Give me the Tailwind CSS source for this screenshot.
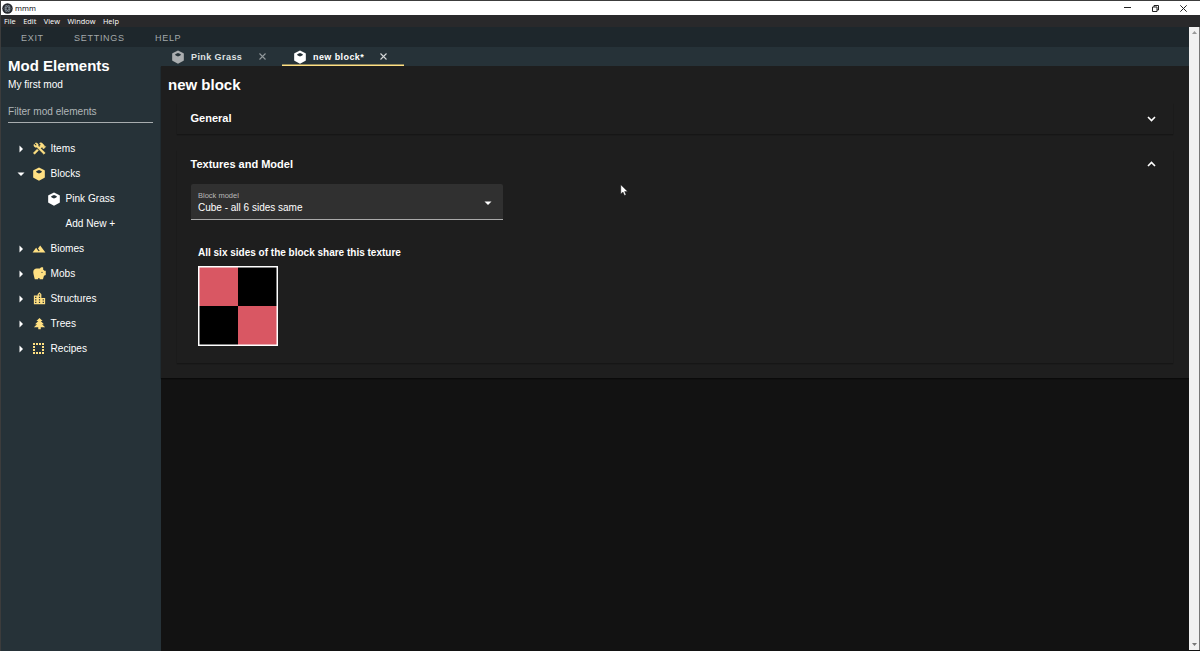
<!DOCTYPE html>
<html lang="en">
<head>
  <meta charset="UTF-8" />
  <meta name="viewport" content="width=device-width, initial-scale=1.0" />
  <title>mmm</title>
  <script src="https://cdn.jsdelivr.net/npm/@tailwindcss/browser@4"></script>
</head>
<body class="h-screen overflow-hidden flex flex-col bg-[#121212] text-white font-['Liberation_Sans',sans-serif] border-t border-l border-[#3c3c3c]">
  <!-- Shared icons -->
  <svg class="hidden">
    <symbol id="cube" viewBox="0 0 24 24"><path fill-rule="evenodd" d="M12 1L21.500 5.500Q22 6 22 7V17Q22 18 21.500 18.300L12 23.500L2.500 18.300Q2 18 2 17V7Q2 6 2.500 5.500ZM12 5L7 7.300L8 9.500L12 11L16 9.500L17 7.300Z" /></symbol>
    <symbol id="right" viewBox="0 0 24 24"><path d="M9 5V19L16 12Z" /></symbol>
  </svg>

  <!-- Title bar -->
  <header class="h-[14px] shrink-0 flex items-center bg-white text-black">
    <svg class="size-[11px] ml-px" viewBox="0 0 22 22" fill="none" stroke="#8e9aa3" stroke-width="1.3">
      <circle cx="11" cy="11" r="10.500" fill="#25272d" stroke="none" />
      <ellipse cx="11" cy="11" rx="7" ry="3" />
      <ellipse cx="11" cy="11" rx="7" ry="3" transform="rotate(60 11 11)" />
      <ellipse cx="11" cy="11" rx="7" ry="3" transform="rotate(120 11 11)" />
    </svg>
    <span class="ml-[2px] pt-px text-[7.500px] leading-none font-['Open_Sans',sans-serif]">mmm</span>
    <div class="ml-auto flex items-center gap-[21px] pr-[13px]">
      <svg class="w-[7px] h-[8px]" viewBox="0 0 7 8" stroke="#222"><path d="M0 3.500H7" /></svg>
      <svg class="w-[7px] h-[7px]" viewBox="0 0 7 7" fill="none" stroke="#222"><path d="M.5 2H5V6.500H.5ZM2 2V.5H6.500V5H5" /></svg>
      <svg class="w-[7px] h-[7px]" viewBox="0 0 7 7" stroke="#222"><path d="M.3 .3L6.700 6.700M6.700 .3L.3 6.700" /></svg>
    </div>
  </header>

  <!-- Native menu -->
  <nav class="h-[12px] shrink-0 flex items-center gap-[7.500px] pl-[3px] pt-px bg-[#29292b] text-[7.400px] leading-none font-['Open_Sans',sans-serif]">
    <span>File</span><span>Edit</span><span>View</span><span>Window</span><span>Help</span>
  </nav>

  <div class="flex flex-1 min-h-0">
    <div class="flex-1 flex flex-col min-w-0">
      <!-- App toolbar -->
      <nav class="h-[20px] shrink-0 flex items-center gap-[30.300px] pl-[20px] pt-[2px] bg-[#1e272c] text-[#a3a8aa] text-[9px] leading-none tracking-[0.7px]">
        <span>EXIT</span><span>SETTINGS</span><span>HELP</span>
      </nav>

      <div class="flex flex-1 min-h-0">
        <!-- Sidebar -->
        <aside class="w-[160px] shrink-0 bg-[#263238] text-[10.100px]">
          <h1 class="pt-[10px] pl-[7px] text-[15px] leading-[18px] font-bold">Mod Elements</h1>
          <p class="pl-[7px] mt-[3px] leading-[13px]">My first mod</p>
          <div class="ml-[7px] mr-[8px] mt-[14px] h-[18px] border-b border-[#a8adaf] text-[#b0b6b9] leading-[13px]">Filter mod elements</div>

          <ul class="mt-[13px] fill-[#ffe082]">
            <li class="h-[25px] flex items-center pl-[14px]">
              <svg class="size-[12px] fill-white"><use href="#right" /></svg>
              <svg class="size-[15px] ml-[5px] mr-[3.500px] -scale-x-100 stroke-[#ffe082]" stroke-width=".8" viewBox="0 0 24 24"><path d="M13.780 15.300L19.780 21.300L21.890 19.140L15.890 13.140L13.780 15.300M17.500 10.100C17.110 10.100 16.690 10.050 16.360 9.910L4.970 21.250L2.860 19.140L10.270 11.740L8.500 9.960L7.780 10.660L6.330 9.250V12.110L5.630 12.810L2.110 9.250L2.810 8.550H5.620L4.220 7.140L7.780 3.580C8.950 2.410 10.830 2.410 12 3.580L9.890 5.740L11.300 7.140L10.590 7.850L12.380 9.630L14.200 7.750C14.060 7.420 14 7 14 6.630C14 4.660 15.560 3.110 17.500 3.110C18.090 3.110 18.610 3.250 19.080 3.530L16.410 6.200L17.910 7.700L20.580 5.030C20.860 5.500 21 6 21 6.630C21 8.550 19.450 10.100 17.500 10.100Z" /></svg>
              <span>Items</span>
            </li>
            <li class="h-[25px] flex items-center pl-[14px]">
              <svg class="size-[12px] fill-white rotate-90"><use href="#right" /></svg>
              <svg class="size-[14px] ml-[5px] mr-[4.500px]"><use href="#cube" /></svg>
              <span>Blocks</span>
            </li>
            <li class="h-[25px] flex items-center pl-[46px]">
              <svg class="size-[14px] mr-[4.500px] fill-white"><use href="#cube" /></svg>
              <span>Pink Grass</span>
            </li>
            <li class="h-[25px] flex items-center pl-[64.500px]">Add New +</li>
            <li class="h-[25px] flex items-center pl-[14px]">
              <svg class="size-[12px] fill-white"><use href="#right" /></svg>
              <svg class="size-[14px] ml-[5px] mr-[4.500px]" viewBox="0 0 24 24"><path d="M14 6L10.250 11L13.100 14.800L11.500 16C9.810 13.750 7 10 7 10L1 18H23L14 6Z" /></svg>
              <span>Biomes</span>
            </li>
            <li class="h-[25px] flex items-center pl-[14px]">
              <svg class="size-[12px] fill-white"><use href="#right" /></svg>
              <svg class="size-[15px] ml-[5px] mr-[3.500px]" viewBox="0 0 24 24"><path d="M19.830 7.500L17.560 5.230C17.630 4.810 17.740 4.420 17.880 4.080C17.960 3.900 18 3.710 18 3.500C18 2.670 17.330 2 16.500 2C14.860 2 13.410 2.790 12.500 4H7.500C4.460 4 2 6.460 2 9.500S4.500 21 4.500 21H10V19H12V21H17.500L19.180 15.410L22 14.470V7.500H19.830M16 11C15.450 11 15 10.550 15 10S15.450 9 16 9C16.550 9 17 9.450 17 10S16.550 11 16 11Z" /></svg>
              <span>Mobs</span>
            </li>
            <li class="h-[25px] flex items-center pl-[14px]">
              <svg class="size-[12px] fill-white"><use href="#right" /></svg>
              <svg class="size-[15px] ml-[5px] mr-[3.500px]" viewBox="0 0 24 24"><path d="M19 15H17V13H19M19 19H17V17H19M13 7H11V5H13M13 11H11V9H13M13 15H11V13H13M13 19H11V17H13M7 11H5V9H7M7 15H5V13H7M7 19H5V17H7M15 11V5L12 2L9 5V7H3V21H21V11H15Z" /></svg>
              <span>Structures</span>
            </li>
            <li class="h-[25px] flex items-center pl-[14px]">
              <svg class="size-[12px] fill-white"><use href="#right" /></svg>
              <svg class="size-[15px] ml-[5px] mr-[3.500px]" viewBox="0 0 24 24"><path d="M10 21V18H3L8 13H5L10 8H7L12 3L17 8H14L19 13H16L21 18H14V21H10Z" /></svg>
              <span>Trees</span>
            </li>
            <li class="h-[25px] flex items-center pl-[14px]">
              <svg class="size-[12px] fill-white"><use href="#right" /></svg>
              <svg class="size-[14px] ml-[5px] mr-[4.500px]" viewBox="0 0 14 14"><path d="M1 1h2v2H1zM4 1h2v2H4zM7 1h2v2H7zM10 1h2v2h-2zM1 4h2v2H1zM10 4h2v2h-2zM1 7h2v2H1zM10 7h2v2h-2zM1 10h2v2H1zM4 10h2v2H4zM7 10h2v2H7zM10 10h2v2h-2z" /></svg>
              <span>Recipes</span>
            </li>
          </ul>
        </aside>

        <main class="flex-1 min-w-0">
          <!-- Tabs -->
          <div class="h-[19px] flex bg-[#263238] text-[9px] font-bold tracking-[0.42px]">
            <div class="w-[121px] flex items-center pl-[10px] text-[#dfe2e3]">
              <svg class="size-[14px] mr-[6px] fill-[#aaadaf]"><use href="#cube" /></svg>
              <span class="pt-[2px]">Pink Grass</span>
              <svg class="size-[7px] ml-auto mr-[16px]" viewBox="0 0 7 7" stroke="#92999c" stroke-width="1.1"><path d="M.5 .5L6.500 6.500M6.500 .5L.5 6.500" /></svg>
            </div>
            <div class="w-[122px] flex items-center pl-[11px] shadow-[inset_0_-1.500px_0_#ffe082]">
              <svg class="size-[14px] mr-[6px] fill-white"><use href="#cube" /></svg>
              <span class="pt-[2px]">new block*</span>
              <svg class="size-[7px] ml-auto mr-[17px]" viewBox="0 0 7 7" stroke="#d5d8d9" stroke-width="1.1"><path d="M.5 .5L6.500 6.500M6.500 .5L.5 6.500" /></svg>
            </div>
          </div>

          <!-- Editor -->
          <div class="h-[312px] bg-[#1e1e1e] pt-[10px] pl-[7px] shadow-[0_1px_1px_#0a0a0a]">
            <h2 class="text-[15px] leading-[18px] font-bold">new block</h2>
            <section class="ml-[9px] mr-[16px] mt-[9px] h-[31px] pl-[13.500px] pr-[17px] flex items-center justify-between shadow-[0_1px_1px_#161616]">
              <h3 class="text-[11px] font-bold">General</h3>
              <svg class="w-[9px] h-[6px] mt-px" viewBox="0 0 9 6" fill="none" stroke="white" stroke-width="1.6"><path d="M1 1L4.500 4.500L8 1" /></svg>
            </section>
            <section class="ml-[9px] mr-[16px] mt-[16px] h-[213px] pl-[13.500px] pr-[17px] shadow-[0_1px_1px_#161616]">
              <div class="h-[29px] flex items-center justify-between">
                <h3 class="text-[11px] font-bold">Textures and Model</h3>
                <svg class="w-[9px] h-[6px] mb-px" viewBox="0 0 9 6" fill="none" stroke="white" stroke-width="1.6"><path d="M1 5L4.500 1.500L8 5" /></svg>
              </div>
              <div class="mt-[5px] w-[312.500px] h-[36px] rounded-t-[2px] bg-[#303030] border-b border-[#aaaaaa] flex items-center justify-between pl-[7.500px] pr-[9px]">
                <div class="pt-[2px]">
                  <p class="text-[7.500px] leading-[10px] text-[#b9b9b9]">Block model</p>
                  <p class="text-[10px] leading-[13px]">Cube - all 6 sides same</p>
                </div>
                <svg class="size-[12px] mt-[2px] fill-white rotate-90"><use href="#right" /></svg>
              </div>
              <p class="mt-[26px] ml-[7.500px] text-[10px] leading-[14px] font-bold">All six sides of the block share this texture</p>
              <div class="mt-[5.500px] ml-[7.500px] size-[80px] relative grid grid-cols-2 after:absolute after:inset-0 after:shadow-[inset_0_0_0_1.500px_#fff]">
                <div class="bg-[#d95763]"></div>
                <div class="bg-black"></div>
                <div class="bg-black"></div>
                <div class="bg-[#d95763]"></div>
              </div>
            </section>
          </div>
        </main>
      </div>
    </div>

    <!-- Scrollbar -->
    <div class="w-[11px] mb-px flex flex-col items-center justify-between py-[4px] bg-[#f1f1f1] border-r border-[#777]">
      <svg class="w-[5px] h-[3px]" viewBox="0 0 5 3" fill="#999"><path d="M0 3L2.500 0L5 3Z" /></svg>
      <svg class="w-[5px] h-[3px]" viewBox="0 0 5 3" fill="#777"><path d="M0 0H5L2.500 3Z" /></svg>
    </div>
  </div>

  <!-- Mouse pointer -->
  <svg class="absolute left-[620px] top-[184px] w-[8px] h-[12px]" viewBox="0 0 8 12" fill="white" stroke="#111" stroke-width=".4"><path d="M.8 .8V10L3 8L4.500 11.500L6 10.800L4.600 7.500H7.600Z" /></svg>
</body>
</html>
